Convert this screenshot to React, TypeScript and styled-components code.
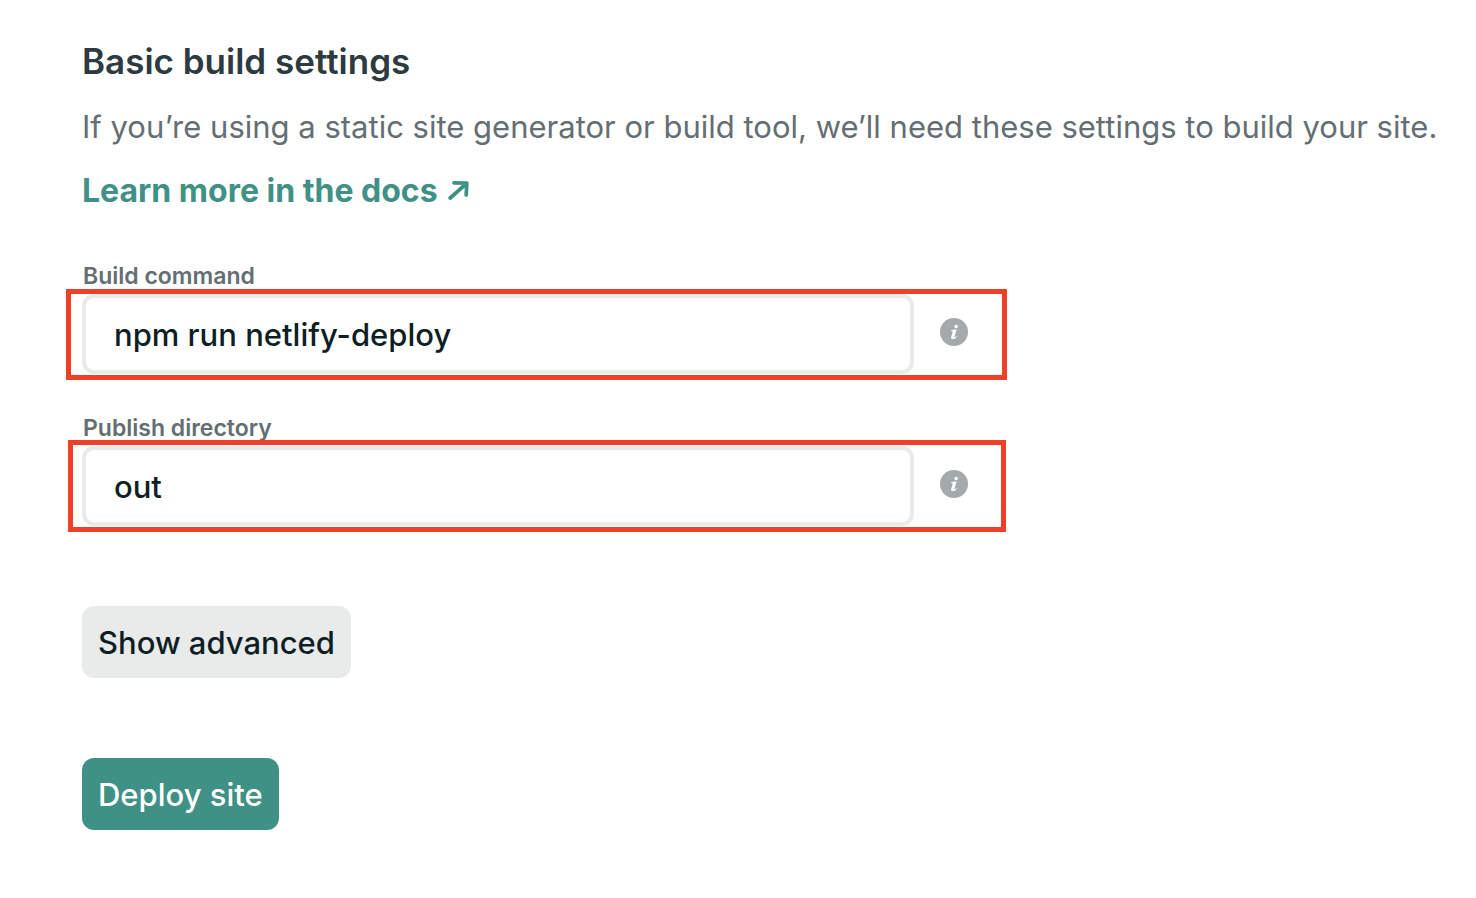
import React, { useState } from "react";
import styled, { createGlobalStyle } from "styled-components";

const GlobalStyle = createGlobalStyle`
  *, *::before, *::after { box-sizing: border-box; }
  body {
    margin: 0;
    background: #fff;
    color: #0e1e25;
    font-family: Inter, "Liberation Sans", sans-serif;
    font-size: 31px;
  }
`;

const Page = styled.main`
  padding: 36px 36px 68px 82px;
`;

const Title = styled.h2`
  margin: 0 0 9px;
  color: #2d3b41;
  font-size: 35px;
  font-weight: 600;
  line-height: 50px;
`;

const Intro = styled.p`
  margin: 0;
  color: #646e73;
  line-height: 64px;
`;

const DocsLink = styled.a`
  display: inline-flex;
  align-items: center;
  gap: 9px;
  color: #3f9186;
  font-size: 32px;
  font-weight: 700;
  text-decoration: none;
  vertical-align: top;
`;

const Form = styled.form`
  display: flex;
  flex-direction: column;
  align-items: flex-start;
  padding-top: 35px;
`;

const Field = styled.div`
  display: flex;
  flex-direction: column;
  width: 100%;
  margin-bottom: 36px;
`;

const Label = styled.label`
  color: #646e73;
  font-size: 23px;
  font-weight: 600;
  line-height: 36px;
  padding-left: 1px;
`;

const FieldRow = styled.div`
  position: relative;
  display: flex;
  align-items: flex-start;
  gap: 26px;
  width: 100%;
  max-width: 886px;
`;

const Highlight = styled.span<{ $inset: string }>`
  position: absolute;
  inset: ${(p) => p.$inset};
  border: 5px solid #ee4026;
  pointer-events: none;
`;

const TextInput = styled.input`
  flex: 1;
  min-width: 0;
  height: 80px;
  padding: 0 28px;
  border: 4px solid #e9ebeb;
  border-radius: 12px;
  background: #fff;
  color: #0e1e25;
  font: inherit;
  font-weight: 500;
  outline: none;
`;

const InfoButton = styled.button`
  display: flex;
  margin-top: 24px;
  padding: 0;
  border: 0;
  background: none;
`;

const Button = styled.button<{ $primary?: boolean }>`
  height: 72px;
  margin-top: ${(p) => (p.$primary ? "80px" : "44px")};
  padding: 0 16px;
  border: 0;
  border-radius: 12px;
  background: ${(p) => (p.$primary ? "#3f9186" : "#e9ebeb")};
  color: ${(p) => (p.$primary ? "#fff" : "#0e1e25")};
  font: inherit;
  font-weight: 500;
`;

const ArrowIcon = () => (
  <svg width="22" height="22" viewBox="0 0 22 22" fill="none" stroke="currentColor" strokeWidth="3.8" strokeLinecap="round" strokeLinejoin="round" aria-hidden="true">
    <path d="M3.2 18 19.6 3.4M7 2.8 19.8 3.2 19.2 15" />
  </svg>
);

const InfoIcon = () => (
  <svg width="28" height="28" viewBox="0 0 28 28" aria-hidden="true">
    <circle cx="14" cy="14" r="14" fill="#a3a9ac" />
    <circle cx="16.2" cy="8.5" r="1.8" fill="#fff" />
    <path d="M11.2 12.1c1.8-.1 3.6-.4 5.4-.8l-2.1 7.5c-.1.5.1.7.5.5.5-.3.9-.8 1.4-1.4l.6.4c-1.2 1.9-2.5 2.9-4.1 2.9-1.5 0-2.1-.9-1.7-2.2l1.4-5.1c.1-.6-.1-.9-.7-.9h-.8z" fill="#fff" />
  </svg>
);

interface SettingProps {
  id: string;
  label: string;
  initial: string;
  inset: string;
}

const Setting = ({ id, label, initial, inset }: SettingProps) => {
  const [value, setValue] = useState(initial);
  return (
    <Field>
      <Label htmlFor={id}>{label}</Label>
      <FieldRow>
        <TextInput id={id} value={value} spellCheck={false} onChange={(e) => setValue(e.target.value)} />
        <InfoButton type="button" aria-label={`About ${label.toLowerCase()}`}>
          <InfoIcon />
        </InfoButton>
        <Highlight $inset={inset} />
      </FieldRow>
    </Field>
  );
};

export default function App() {
  return (
    <>
      <GlobalStyle />
      <Page>
        <Title>Basic build settings</Title>
        <Intro>
          If you’re using a static site generator or build tool, we’ll need these settings to build your site.{" "}
          <DocsLink href="#docs">
            Learn more in the docs
            <ArrowIcon />
          </DocsLink>
        </Intro>
        <Form onSubmit={(e) => e.preventDefault()}>
          <Setting id="build-command" label="Build command" initial="npm run netlify-deploy" inset="-5px -39px -6px -16px" />
          <Setting id="publish-directory" label="Publish directory" initial="out" inset="-6px -38px -6px -14px" />
          <Button type="button">Show advanced</Button>
          <Button type="submit" $primary>
            Deploy site
          </Button>
        </Form>
      </Page>
    </>
  );
}
